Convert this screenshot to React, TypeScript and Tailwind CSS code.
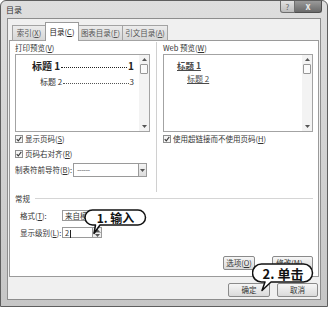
import React from "react";

const cjk = "font-['Noto_Sans_CJK_SC','Liberation_Sans',sans-serif]";

function U({ c }: { c: string }) {
  return <span className="underline">{c}</span>;
}

function Checkbox({ children }: { children: React.ReactNode }) {
  return (
    <div className="flex h-[12px] items-center">
      <span className="flex h-[8px] w-[8px] items-center justify-center border border-[#8e8f8f] bg-[#f5f5f5]">
        <svg width="6" height="6" viewBox="0 0 6 6">
          <path d="M0.7 3.1 L2.3 4.8 L5.3 0.9" fill="none" stroke="#3a3a3a" strokeWidth="1.1" />
        </svg>
      </span>
      <span className="ml-[2px] leading-[12px]">{children}</span>
    </div>
  );
}

function Arrow({ up }: { up?: boolean }) {
  return (
    <svg width="5" height="3" viewBox="0 0 5 3">
      <path d={up ? "M0 3 L2.5 0 L5 3Z" : "M0 0 L2.5 3 L5 0Z"} fill="#555" />
    </svg>
  );
}

function Scroll() {
  return (
    <div className="flex w-[10px] flex-col items-center bg-[#f3f3f3]">
      <div className="flex h-[9px] items-center justify-center">
        <Arrow up />
      </div>
      <div className="h-[10px] w-[8px] rounded-[1px] border border-[#979797] bg-[#fafafa]" />
      <div className="flex-1" />
      <div className="flex h-[9px] items-center justify-center">
        <Arrow />
      </div>
    </div>
  );
}

function DropBtn() {
  return (
    <div className="flex w-[8px] items-center justify-center border-l border-[#9a9a9a] bg-gradient-to-b from-[#f4f4f4] to-[#dcdcdc]">
      <Arrow />
    </div>
  );
}

function Btn({ w, children }: { w: string; children: React.ReactNode }) {
  return (
    <div
      className={`flex h-[14px] items-center justify-center overflow-hidden whitespace-nowrap rounded-[2px] border border-[#8a8a8a] bg-gradient-to-b from-[#f6f6f6] to-[#dadada] text-[7.5px] text-[#333] ${w}`}
    >
      {children}
    </div>
  );
}

function Tab({ active, w, children }: { active?: boolean; w: string; children: React.ReactNode }) {
  return (
    <div
      className={
        active
          ? `-ml-px flex h-[19px] items-center justify-center border border-b-0 border-[#9a9a9a] bg-white text-[7.5px] text-[#222] ${w}`
          : `-ml-px flex h-[16px] items-center justify-center border border-[#a3a3a3] bg-gradient-to-b from-[#ececec] to-[#d6d6d6] text-[7.5px] text-[#555] ${w}`
      }
    >
      {children}
    </div>
  );
}

export default function App() {
  return (
    <div className={`relative h-[312px] w-[333px] bg-white ${cjk}`}>
      {/* window */}
      <div className="flex h-[307px] w-[328px] flex-col rounded-t-[6px] border border-[#5e5e5e] bg-gradient-to-b from-[#dedede] to-[#c6c6c6]">
        <div className="flex h-[17px] items-start">
          <span className="ml-[5px] mt-[3px] text-[8px] leading-[11px] text-[#333]">目录</span>
          <div className="ml-auto mr-[5px] flex h-[12px]">
            <div className="flex w-[15px] items-center justify-center rounded-bl-[3px] border border-t-0 border-[#6f6f6f] bg-gradient-to-b from-[#e2e2e2] to-[#bcbcbc] text-[8px] text-[#666]">
              ?
            </div>
            <div className="flex w-[27px] items-center justify-center rounded-br-[3px] border border-l-0 border-t-0 border-[#4f4f4f] bg-gradient-to-b from-[#9a9a9a] to-[#6a6a6a] text-[9px] font-bold leading-none text-[#e8e8e8]">
              x
            </div>
          </div>
        </div>

        {/* client */}
        <div className="mx-[6px] mb-[6px] flex flex-1 flex-col border border-[#8d8d8d] bg-[#f0f0f0]">
          <div className="relative z-10 -mb-px mt-[3px] flex h-[19px] items-end pl-[5px]">
            <Tab w="w-[34px]">
              索引(<U c="X" />)
            </Tab>
            <Tab active w="w-[34px]">
              目录(<U c="C" />)
            </Tab>
            <Tab w="w-[45px]">
              图表目录(<U c="F" />)
            </Tab>
            <Tab w="w-[46px]">
              引文目录(<U c="A" />)
            </Tab>
          </div>

          {/* tab panel */}
          <div className="mx-px flex h-[237px] flex-col border border-[#9a9a9a] bg-white pb-[6px] pl-[5px] pr-[5px] pt-px text-[7.5px] text-[#333]">
            <div className="flex h-[150px]">
              <div className="flex w-[135px] flex-col">
                <div className="h-[11px] leading-[11px]">
                  打印预览(<U c="V" />)
                </div>
                <div className="mt-px flex h-[78px] border border-[#a3a3a3] bg-white">
                  <div className="min-w-0 flex-1 pl-[16px] pr-[5px] pt-[4px]">
                    <div className="flex h-[12px] items-center whitespace-nowrap text-[10px] font-bold text-[#222]">
                      <span>标题 1</span>
                      <span className="mx-px mb-[3px] min-w-0 flex-1 self-end border-b border-dotted border-[#222]" />
                      <span>1</span>
                    </div>
                    <div className="ml-[8px] mt-[5px] flex h-[11px] items-center whitespace-nowrap text-[8px] text-[#333]">
                      <span>标题 2</span>
                      <span className="mx-px mb-[3px] min-w-0 flex-1 self-end border-b border-dotted border-[#555]" />
                      <span>3</span>
                    </div>
                  </div>
                  <Scroll />
                </div>
                <div className="mt-px">
                  <Checkbox>
                    显示页码(<U c="S" />)
                  </Checkbox>
                </div>
                <div className="mt-[3px]">
                  <Checkbox>
                    页码右对齐(<U c="R" />)
                  </Checkbox>
                </div>
                <div className="mt-[3px] flex h-[14px] items-center">
                  <span className="w-[58px] whitespace-nowrap">
                    制表符前导符(<U c="B" />):
                  </span>
                  <div className="flex h-[14px] w-[74px] border border-[#9a9a9a] bg-white">
                    <span className="flex-1 pl-[3px] leading-[11px] tracking-[-0.5px] text-[#555]">------</span>
                    <DropBtn />
                  </div>
                </div>
              </div>

              <div className="ml-[6px] w-px bg-[#d0d0d0]" />

              <div className="ml-[6px] flex w-[150px] flex-col">
                <div className="h-[11px] leading-[11px]">
                  Web 预览(<U c="W" />)
                </div>
                <div className="mt-px flex h-[78px] border border-[#a3a3a3] bg-white">
                  <div className="flex-1 pl-[13px] pt-[5px] text-[#4a4a4a]">
                    <div className="h-[11px] text-[8.5px] font-bold leading-[11px] underline">标题 1</div>
                    <div className="ml-[10px] mt-[2px] h-[11px] text-[8px] leading-[11px] underline">标题 2</div>
                  </div>
                  <Scroll />
                </div>
                <div className="mt-px">
                  <Checkbox>
                    使用超链接而不使用页码(<U c="H" />)
                  </Checkbox>
                </div>
              </div>
            </div>

            {/* 常规 */}
            <div className="mt-px flex h-[11px] items-center">
              <span className="leading-[11px]">常规</span>
              <div className="ml-[5px] h-px flex-1 bg-[#d5d5d5]" />
            </div>
            <div className="ml-[5px] mt-[6px] flex h-[11px] items-center">
              <span className="w-[42px] whitespace-nowrap">
                格式(<U c="T" />):
              </span>
              <div className="flex h-[11px] w-[62px] border border-[#9a9a9a] bg-white">
                <span className="flex-1 overflow-hidden whitespace-nowrap pl-[2px] leading-[9px]">来自模板</span>
                <DropBtn />
              </div>
            </div>
            <div className="ml-[5px] mt-[6px] flex h-[11px] items-center">
              <span className="w-[42px] whitespace-nowrap">
                显示级别(<U c="L" />):
              </span>
              <div className="flex h-[11px] w-[40px] border border-[#9a9a9a] bg-white">
                <span className="flex-1 pl-[2px] leading-[9px]">
                  2<span className="ml-px inline-block h-[8px] w-px bg-[#222] align-middle" />
                </span>
                <div className="flex w-[9px] flex-col border-l border-[#9a9a9a] bg-[#eeeeee]">
                  <div className="flex flex-1 items-center justify-center border-b border-[#b0b0b0]">
                    <Arrow up />
                  </div>
                  <div className="flex flex-1 items-center justify-center">
                    <Arrow />
                  </div>
                </div>
              </div>
            </div>

            <div className="flex-1" />
            <div className="flex justify-end gap-[17px]">
              <Btn w="w-[32px]">
                选项(<U c="O" />)
              </Btn>
              <Btn w="w-[41px]">
                修改(<U c="M" />)...
              </Btn>
            </div>
          </div>

          <div className="mt-[6px] flex justify-end gap-[7px] pr-[2px]">
            <Btn w="w-[42px]">确定</Btn>
            <Btn w="w-[41px]">取消</Btn>
          </div>
        </div>
      </div>

      {/* callout 1 */}
      <div className="absolute left-[84px] top-[209px] h-[26px] w-[63px]">
        <svg className="absolute left-0 top-0" width="63" height="26" viewBox="0 0 63 26">
          <path
            d="M8.5 1 H54 A7.5 7.5 0 0 1 54 16 H16 L10 24.5 L11.5 16 H8.5 A7.5 7.5 0 0 1 8.5 1 Z"
            fill="white"
            stroke="#111"
            strokeWidth="1.5"
            strokeLinejoin="round"
          />
        </svg>
        <div className="relative flex h-[17px] items-center justify-center text-[12px] font-bold leading-none text-[#111]">
          1. 输入
        </div>
      </div>

      {/* callout 2 */}
      <div className="absolute left-[252px] top-[263px] h-[29px] w-[62px]">
        <svg className="absolute left-0 top-0" width="62" height="29" viewBox="0 0 62 29">
          <path
            d="M9.5 1 H51.5 A9 9 0 0 1 51.5 19 H19 L10 27.5 L13 19 H9.5 A9 9 0 0 1 9.5 1 Z"
            fill="white"
            stroke="#111"
            strokeWidth="1.5"
            strokeLinejoin="round"
          />
        </svg>
        <div className="relative flex h-[20px] items-center justify-center text-[13px] font-bold leading-none text-[#111]">
          2. 单击
        </div>
      </div>
    </div>
  );
}
